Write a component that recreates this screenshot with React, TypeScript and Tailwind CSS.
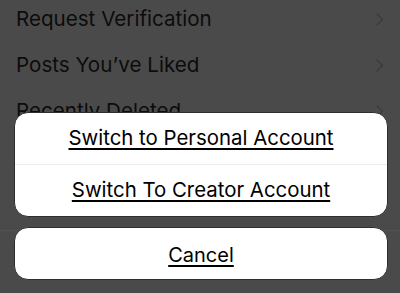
import React from 'react';

const rows = ['Request Verification', 'Posts You\u2019ve Liked', 'Recently Deleted'];

function Chevron() {
  return (
    <svg className="w-[8px] h-[13px] text-[#3a3a3a]" viewBox="0 0 8 13" fill="none">
      <path d="M1 1l5.5 5.5L1 12" stroke="currentColor" strokeWidth="1.2" strokeLinecap="round" strokeLinejoin="round" />
    </svg>
  );
}

export default function App() {
  return (
    <div className="relative w-[400px] h-[293px] overflow-hidden bg-[#4a4a4a] font-['Inter','Liberation_Sans',sans-serif]">
      {/* dimmed settings list behind the sheet */}
      <div className="-mt-[4px] flex flex-col">
        {rows.map((label) => (
          <div key={label} className="h-[46px] flex items-center justify-between pl-[16px] pr-[16px]">
            <span className="text-[20.6px] text-[#0c0c0c]">{label}</span>
            <Chevron />
          </div>
        ))}
      </div>
      <div className="mt-[96px] h-px bg-[#525252]"></div>

      {/* action sheet */}
      <div className="absolute inset-0 flex flex-col justify-end pl-[14px] pr-[12px] pb-[13px] gap-[10px]">
        <div className="rounded-[14px] bg-white border border-[#2e2e2e] overflow-hidden flex flex-col">
          <button className="h-[51px] flex items-center justify-center text-[20.4px] text-black underline underline-offset-[3px] decoration-[1.5px]">
            Switch to Personal Account
          </button>
          <div className="h-px bg-[#ececec]"></div>
          <button className="h-[51px] flex items-center justify-center text-[20.4px] text-black underline underline-offset-[3px] decoration-[1.5px]">
            Switch To Creator Account
          </button>
        </div>
        <div className="rounded-[14px] bg-white border border-[#2e2e2e]">
          <button className="w-full h-[51px] flex items-center justify-center pt-[2px] text-[20px] text-black underline underline-offset-[3px] decoration-[1.5px]">
            Cancel
          </button>
        </div>
      </div>
    </div>
  );
}
